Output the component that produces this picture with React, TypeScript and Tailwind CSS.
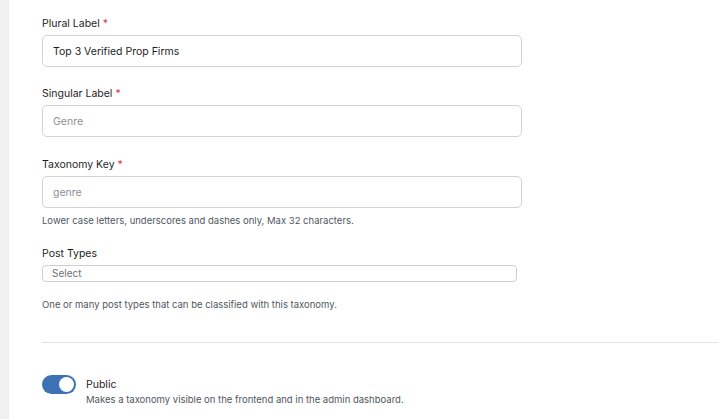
import React, { useState } from 'react';

const Req = () => <span className="text-[#d63638] ml-[3px]">*</span>;

const TextField = ({
  label,
  value,
  placeholder,
  help,
  className = '',
}: {
  label: string;
  value?: string;
  placeholder?: string;
  help?: string;
  className?: string;
}) => (
  <div className={className}>
    <label className="block pt-[2px] text-[10.5px] leading-4 font-normal text-[#1e1e1e]">
      {label}
      <Req />
    </label>
    <input
      defaultValue={value}
      placeholder={placeholder}
      className="mt-[3px] block w-[480px] h-8 px-[10px] rounded-[5px] border border-[#d2d3da] bg-white text-[10.5px] text-[#1e1e1e] placeholder:text-[#8c8f94] outline-none"
    />
    {help && <p className="mt-[6px] text-[9.5px] leading-[14px] text-[#50575e]">{help}</p>}
  </div>
);

const App = () => {
  const [isPublic, setIsPublic] = useState(true);

  return (
    <div className="flex min-h-[419px] bg-white font-['Inter',sans-serif]">
      <div className="w-[9px] shrink-0 bg-[#f0f0f1]" />
      <div className="flex-1 pl-[33px] pt-[14px]">
        <div className="flex flex-col gap-[17px]">
          <TextField label="Plural Label" value="Top 3 Verified Prop Firms" />
          <TextField label="Singular Label" placeholder="Genre" />
          <TextField
            className="mt-[1px]"
            label="Taxonomy Key"
            placeholder="genre"
            help="Lower case letters, underscores and dashes only, Max 32 characters."
          />
        </div>

        <div className="mt-[18px]">
          <label className="block text-[10.5px] leading-4 font-normal text-[#1e1e1e]">Post Types</label>
          <button className="mt-[3px] flex items-center w-[475px] h-[17px] px-[9px] rounded-[4px] border border-[#cfd0d6] bg-white text-[10px] text-[#6c7075]">
            Select
          </button>
          <p className="mt-[16px] text-[9.5px] leading-[14px] text-[#50575e]">
            One or many post types that can be classified with this taxonomy.
          </p>
        </div>

        <div className="mt-[30px] border-t border-[#e4e4e7]" />

        <div className="mt-[32px] flex items-start gap-[10px]">
          <button
            onClick={() => setIsPublic(!isPublic)}
            className={`relative w-[34px] h-[19px] rounded-full ${isPublic ? 'bg-[#3c72b4]' : 'bg-[#c3c4c7]'}`}
          >
            <span
              className={`absolute top-[2px] h-[15px] w-[15px] rounded-full bg-white ${isPublic ? 'left-[17px]' : 'left-[2px]'}`}
            />
          </button>
          <div className="pt-[2px]">
            <div className="text-[10.5px] leading-4 font-normal text-[#1e1e1e]">Public</div>
            <div className="text-[9.5px] leading-[14px] text-[#50575e]">
              Makes a taxonomy visible on the frontend and in the admin dashboard.
            </div>
          </div>
        </div>
      </div>
    </div>
  );
};

export default App;
